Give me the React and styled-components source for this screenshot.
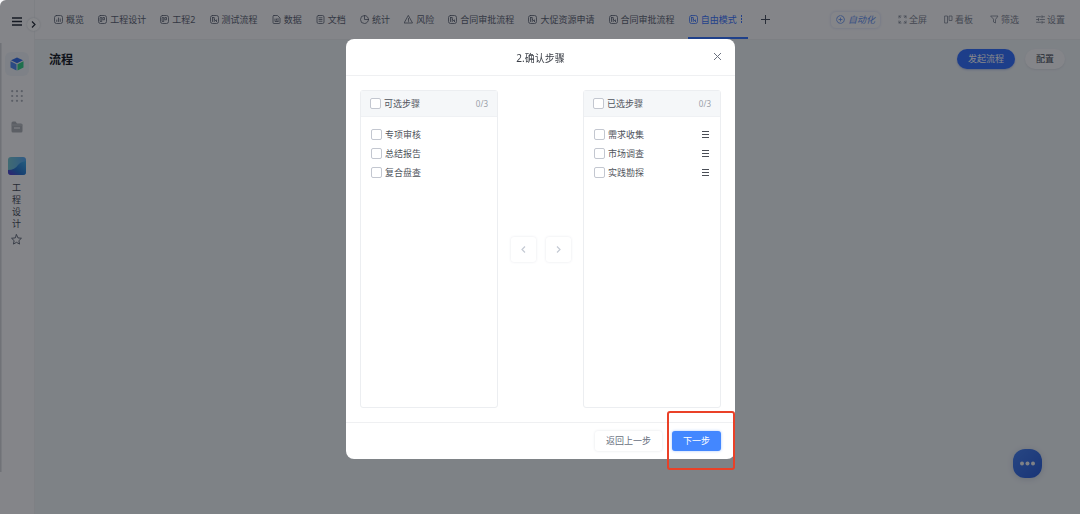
import React from "react";
import styled, { createGlobalStyle, css } from "styled-components";

const GlobalStyle = createGlobalStyle`
  *, *::before, *::after { box-sizing: border-box; }
  body {
    margin: 0;
    background: #fff;
    color: #586070;
    font-family: "Noto Sans", "Noto Sans CJK SC", sans-serif;
    font-size: 9px;
    line-height: 12px;
  }
  button { font: inherit; color: inherit; border: 0; padding: 0; background: none; cursor: pointer; }
  a { color: inherit; text-decoration: none; }
  svg { display: block; flex: none; }
  ul { list-style: none; margin: 0; padding: 0; }
`;

const Page = styled.div`
  display: flex;
  min-height: 100vh;
  background: #eff4f7;
`;

const Sidebar = styled.aside`
  position: relative;
  flex: none;
  width: 35px;
  display: flex;
  flex-direction: column;
  align-items: center;
  padding: 15px 1px 0 0;
  background: #fafafc;
  border-right: 1px solid #eff0f3;
`;

const EdgeShade = styled.span`
  position: absolute;
  left: 0;
  top: 43px;
  bottom: 42px;
  width: 2px;
  background: linear-gradient(90deg, #c9cbd0, #eeeff2);
`;

const CollapseButton = styled.button`
  position: absolute;
  left: 27px;
  top: 18px;
  width: 13px;
  height: 13px;
  display: grid;
  place-items: center;
  border-radius: 50%;
  background: #fff;
  box-shadow: 0 0 2px #c8ccd4;
`;

const IconButton = styled.button`
  display: grid;
  place-items: center;
  width: 24px;
  height: ${(p) => p.$h || 24}px;
  margin-top: ${(p) => p.$gap || 0}px;
  border-radius: 6px;
  background: ${(p) => (p.$active ? "#eef3f8" : "none")};
`;

const Avatar = styled.svg`
  margin-top: 18px;
  border-radius: 3px;
`;

const SpaceName = styled.div`
  width: 10px;
  margin: 7px 0 3px;
  text-align: center;
  color: #3e4552;
`;

const Content = styled.div`
  flex: 1;
  min-width: 0;
`;

const TopBar = styled.header`
  display: flex;
  justify-content: space-between;
  align-items: stretch;
  height: 40px;
  padding: 0 15px 0 19px;
  background: #fafafc;
  border-bottom: 1px solid #eceef1;
`;

const Tabs = styled.nav`
  display: flex;
  justify-content: space-between;
  flex: 0 1 716px;
`;

const Tab = styled.a`
  position: relative;
  display: flex;
  align-items: center;
  gap: 3px;
  white-space: nowrap;
  color: ${(p) => (p.$active ? "#3672ff" : "inherit")};
  ${(p) =>
    p.$active &&
    css`
      padding-right: 4px;
      &::after {
        content: "";
        position: absolute;
        left: -1px;
        right: -1px;
        bottom: 0;
        height: 2px;
        background: #3070ff;
      }
    `}
`;

const Tools = styled.div`
  display: flex;
  align-items: center;
  gap: 17px;
`;

const Tool = styled.button`
  display: flex;
  align-items: center;
  gap: 2px;
  white-space: nowrap;
  color: #7a8290;
`;

const AutoTool = styled(Tool)`
  gap: 3px;
  height: 18px;
  padding: 0 5px;
  border: 1px solid #e9edfb;
  border-radius: 6px;
  color: #5c8df0;
  font-style: italic;
  box-shadow: 0 0 2px #e2e7f8;
`;

const PageHead = styled.div`
  display: flex;
  align-items: flex-start;
  justify-content: space-between;
  padding: 9px 15px 0 14px;
`;

const PageTitle = styled.h1`
  margin: 0;
  font-size: 12px;
  line-height: 22px;
  color: #10141c;
`;

const Actions = styled.div`
  display: flex;
  gap: 10px;
`;

const Pill = styled.button`
  height: 20px;
  padding: 0 11px;
  border-radius: 10px;
  background: ${(p) => (p.$primary ? "#2c6cff" : "#fafafc")};
  color: ${(p) => (p.$primary ? "#fff" : "#3e4552")};
  box-shadow: 0 1px 2px ${(p) => (p.$primary ? "#aebfe8" : "#dde1e6")};
`;

const ChatButton = styled.button`
  position: fixed;
  right: 38px;
  bottom: 36px;
  width: 29px;
  height: 29px;
  display: grid;
  place-items: center;
  border-radius: 12px;
  background: linear-gradient(135deg, #417df0, #2459d8);
  box-shadow: 0 1px 6px #c8d0dc;
`;

const Overlay = styled.div`
  position: fixed;
  inset: 0;
  padding: 39px 0 0 1px;
  border-top-left-radius: 6px;
  background: rgba(13, 16, 22, 0.5);
`;

const Dialog = styled.section`
  position: relative;
  width: 389px;
  max-width: 100%;
  margin: 0 auto;
  border-radius: 8px;
  background: #fff;
`;

const DialogHead = styled.header`
  position: relative;
  display: flex;
  align-items: center;
  justify-content: center;
  height: 37px;
  padding-top: 1px;
  border-bottom: 1px solid #eff0f2;
`;

const DialogTitle = styled.h2`
  margin: 0;
  font-size: 10px;
  font-weight: 400;
  color: #3c4048;
`;

const CloseButton = styled.button`
  position: absolute;
  right: 13px;
  top: 13px;
`;

const Transfer = styled.div`
  display: flex;
  align-items: stretch;
  padding: 14px;
`;

const Panel = styled.section`
  flex: 1;
  min-height: 318px;
  border: 1px solid #eceef1;
  border-radius: 3px;
`;

const PanelHead = styled.header`
  display: flex;
  align-items: center;
  justify-content: space-between;
  height: 26px;
  padding: 0 9px;
  border-bottom: 1px solid #eff1f4;
  background: #f5f7f9;
`;

const Count = styled.span`
  font-size: 8px;
  color: #9a9fa9;
`;

const StepList = styled.ul`
  padding: 8px 10px;
`;

const StepRow = styled.li`
  display: flex;
  align-items: center;
  justify-content: space-between;
  height: 19px;
`;

const CheckLabel = styled.label`
  display: flex;
  align-items: center;
  gap: 3px;
  color: #50545c;
`;

const Checkbox = styled.input.attrs({ type: "checkbox" })`
  appearance: none;
  width: 11px;
  height: 11px;
  margin: 0;
  border: 1px solid #c3c7d0;
  border-radius: 2px;
  background: #fff;
  &:checked { background: #4387ff; border-color: #4387ff; }
`;

const Movers = styled.div`
  display: flex;
  align-items: center;
  gap: 10px;
  padding: 0 12px 0 13px;
`;

const MoveButton = styled.button`
  display: grid;
  place-items: center;
  width: 25px;
  height: 25px;
  border-radius: 3px;
  background: #fff;
  color: #c4cad4;
  box-shadow: 0 0 3px #e6e8ec;
`;

const DialogFoot = styled.footer`
  display: flex;
  align-items: center;
  justify-content: flex-end;
  gap: 10px;
  height: 37px;
  padding: 0 14px;
  border-top: 1px solid #eff0f2;
`;

const FootButton = styled.button`
  height: 20px;
  padding: 0 11px;
  border-radius: 3px;
  background: ${(p) => (p.$primary ? "#4387ff" : "#fff")};
  color: ${(p) => (p.$primary ? "#fff" : "#687080")};
  box-shadow: 0 0 3px ${(p) => (p.$primary ? "#a9c8ff" : "#e3e5e9")};
`;

const Marker = styled.span`
  position: absolute;
  right: 0;
  bottom: -11px;
  width: 68px;
  height: 59px;
  border: 2px solid #ea4128;
  border-radius: 3px;
  pointer-events: none;
`;

const Svg = ({ size = 9, box = 18, children, width = 1.6 }) => (
  <svg width={size} height={size} viewBox={`0 0 ${box} ${box}`} fill="none" stroke="currentColor" strokeWidth={width} strokeLinecap="round" strokeLinejoin="round" aria-hidden="true">
    {children}
  </svg>
);

const frame = <rect x="1" y="1" width="16" height="16" rx="4" />;

const icons = {
  chart: <>{frame}<path d="M5.5 10v3M9 6v7M12.5 8v5" /></>,
  board: <>{frame}<path d="M5 5h2.500v8H5zM10.500 5H13v4.500h-2.500z" /></>,
  flow: <>{frame}<path d="M5 5v8M5 5h3.500v8M8.500 8.500 13 13M13 10v3" /></>,
  data: <><path d="M4 1h7l5 5v9q0 2-2 2H4q-2 0-2-2V3q0-2 2-2z" /><path d="M6 8v5h6M9 8v2.500M12 7v6" /></>,
  doc: <><rect x="2" y="1" width="14" height="16" rx="3" /><path d="M6 5.500h6M6 9h6M6 12.500h6" /></>,
  pie: <><circle cx="9" cy="9" r="8" /><path d="M9 1v8h8" /></>,
  risk: <><path d="M9 1.500 17 16H1z" /><path d="M9 7v4M9 13.300v.200" /></>,
  full: <path d="M2 6V2h4M2 2l3 3M16 6V2h-4M16 2l-3 3M2 12v4h4M2 16l3-3M16 12v4h-4M16 16l-3-3" />,
  kanban: <path d="M2 2h5v14H2zM11 2h5v9h-5z" />,
  filter: <path d="M2 2h14l-5 7v7l-4-2V9z" />,
  settings: <><path d="M1 3.500h8M12 3.500h5M1 9h4M8 9h9M1 14.500h8M12 14.500h5" /><path d="M12 1.500v4M5 7v4M12 12.500v4" /></>,
  auto: <><circle cx="9" cy="9" r="8" strokeDasharray="10 2.500" /><path d="M9 6v6M6 9h6" /></>,
};

const tabs = [
  ["概览", "chart"],
  ["工程设计", "board"],
  ["工程2", "board"],
  ["测试流程", "flow"],
  ["数据", "data"],
  ["文档", "doc"],
  ["统计", "pie"],
  ["风险", "risk"],
  ["合同审批流程", "flow"],
  ["大促资源申请", "flow"],
  ["合同审批流程", "flow"],
  ["自由模式", "flow", true],
];

const tools = [
  ["全屏", "full"],
  ["看板", "kanban"],
  ["筛选", "filter"],
  ["设置", "settings"],
];

function StepPanel({ title, steps, sortable }) {
  return (
    <Panel>
      <PanelHead>
        <CheckLabel><Checkbox />{title}</CheckLabel>
        <Count>0/{steps.length}</Count>
      </PanelHead>
      <StepList>
        {steps.map((step) => (
          <StepRow key={step}>
            <CheckLabel><Checkbox />{step}</CheckLabel>
            {sortable && (
              <svg width="9" height="7" viewBox="0 0 9 7" stroke="#4a4e56" aria-hidden="true">
                <path d="M1 .5h7M1 3.5h7M1 6.5h7" />
              </svg>
            )}
          </StepRow>
        ))}
      </StepList>
    </Panel>
  );
}

export default function App() {
  return (
    <>
      <GlobalStyle />
      <Page>
        <Sidebar>
          <EdgeShade />
          <IconButton $h={12} aria-label="菜单">
            <svg width="10" height="9" viewBox="0 0 10 9" stroke="#1d2430" strokeWidth="1.4">
              <path d="M0 1h10M0 4.500h10M0 8h10" />
            </svg>
          </IconButton>
          <CollapseButton aria-label="展开">
            <svg width="5" height="7" viewBox="0 0 5 7" fill="none" stroke="#1d2430" strokeWidth="1.2"><path d="m1 .5 3 3-3 3" /></svg>
          </CollapseButton>
          <IconButton $active $gap={25} aria-label="项目">
            <svg width="14" height="14" viewBox="0 0 28 28">
              <path d="M14 1 26 6.500 14 12.500 2 6.500z" fill="#2f6be8" />
              <path d="M1 8.500 13 14.500V27L1 21z" fill="#4a86f0" />
              <path d="M27 8.500 15 14.500V27l12-6z" fill="#2fcf84" />
            </svg>
          </IconButton>
          <IconButton $gap={8} aria-label="应用">
            <svg width="12" height="12" viewBox="0 0 12 12" fill="#a8adb6">
              {[1.2, 6, 10.8].map((y) => [1.2, 6, 10.8].map((x) => <circle key={`${x}-${y}`} cx={x} cy={y} r="1.1" />))}
            </svg>
          </IconButton>
          <IconButton $gap={7} aria-label="文件夹">
            <svg width="12" height="12" viewBox="0 0 24 24">
              <path d="M1 4q0-3 3-3h5l3 4h8q3 0 3 3v12q0 3-3 3H4q-3 0-3-3z" fill="#abafb5" />
              <path d="M1 8h22" stroke="#c2c5ca" strokeWidth="2" />
              <path d="M6 14h12" stroke="#fff" strokeWidth="2" />
            </svg>
          </IconButton>
          <Avatar width="18" height="18" viewBox="0 0 18 18" aria-hidden="true">
            <defs>
              <linearGradient id="sky" x1="0" y1="0" x2="1" y2="0"><stop stopColor="#72c5cf" /><stop offset="1" stopColor="#52a5f4" /></linearGradient>
              <linearGradient id="sea" x1="0" y1="1" x2="1" y2="0"><stop stopColor="#5a2fd0" /><stop offset=".4" stopColor="#2070cc" /><stop offset="1" stopColor="#3baae8" /></linearGradient>
            </defs>
            <path d="M0 0h18v18H0z" fill="url(#sky)" />
            <path d="M0 13q7 0 10-5 2-3 8-4v14H0z" fill="url(#sea)" />
          </Avatar>
          <SpaceName>工程设计</SpaceName>
          <IconButton $h={12} aria-label="收藏">
            <Svg size={11} box={24} width={2}><path d="m12 1.500 3.200 7 7.600.8-5.600 5.200 1.500 7.500L12 18.200 5.300 22l1.500-7.500L1.200 9.300l7.600-.8z" /></Svg>
          </IconButton>
        </Sidebar>
        <Content>
          <TopBar>
            <Tabs>
              {tabs.map(([name, icon, active], i) => (
                <Tab key={i} href="#" $active={active}>
                  <Svg>{icons[icon]}</Svg>
                  {name}
                  {active && (
                    <svg width="3" height="9" viewBox="0 0 3 9" fill="currentColor"><path d="M1 0h1v2H1zM1 3h1v2H1zM1 6h1v2H1z" /></svg>
                  )}
                </Tab>
              ))}
              <Tool aria-label="添加">
                <svg width="9" height="9" viewBox="0 0 9 9" stroke="#434b5a"><path d="M4.500 0v9M0 4.500h9" /></svg>
              </Tool>
            </Tabs>
            <Tools>
              <AutoTool><Svg>{icons.auto}</Svg>自动化</AutoTool>
              {tools.map(([name, icon]) => (
                <Tool key={name}><Svg>{icons[icon]}</Svg>{name}</Tool>
              ))}
            </Tools>
          </TopBar>
          <PageHead>
            <PageTitle>流程</PageTitle>
            <Actions>
              <Pill $primary>发起流程</Pill>
              <Pill>配置</Pill>
            </Actions>
          </PageHead>
        </Content>
        <ChatButton aria-label="聊天">
          <svg width="17" height="5" viewBox="0 0 17 5" fill="#f0f2f6"><circle cx="3" cy="2.500" r="2" /><circle cx="8.500" cy="2.500" r="2" /><circle cx="14" cy="2.500" r="2" /></svg>
        </ChatButton>
      </Page>
      <Overlay>
        <Dialog role="dialog" aria-labelledby="dialog-title">
          <DialogHead>
            <DialogTitle id="dialog-title">2.确认步骤</DialogTitle>
            <CloseButton aria-label="关闭">
              <svg width="9" height="9" viewBox="0 0 9 9" stroke="#6c7280"><path d="m1 1 7 7M8 1 1 8" /></svg>
            </CloseButton>
          </DialogHead>
          <Transfer>
            <StepPanel title="可选步骤" steps={["专项审核", "总结报告", "复合盘查"]} />
            <Movers>
              <MoveButton aria-label="移到左侧">
                <svg width="5" height="7" viewBox="0 0 5 7" fill="none" stroke="currentColor" strokeWidth="1.200"><path d="m4 .5-3 3 3 3" /></svg>
              </MoveButton>
              <MoveButton aria-label="移到右侧">
                <svg width="5" height="7" viewBox="0 0 5 7" fill="none" stroke="currentColor" strokeWidth="1.200"><path d="m1 .5 3 3-3 3" /></svg>
              </MoveButton>
            </Movers>
            <StepPanel title="已选步骤" steps={["需求收集", "市场调查", "实践勘探"]} sortable />
          </Transfer>
          <DialogFoot>
            <FootButton>返回上一步</FootButton>
            <FootButton $primary>下一步</FootButton>
          </DialogFoot>
          <Marker />
        </Dialog>
      </Overlay>
    </>
  );
}
